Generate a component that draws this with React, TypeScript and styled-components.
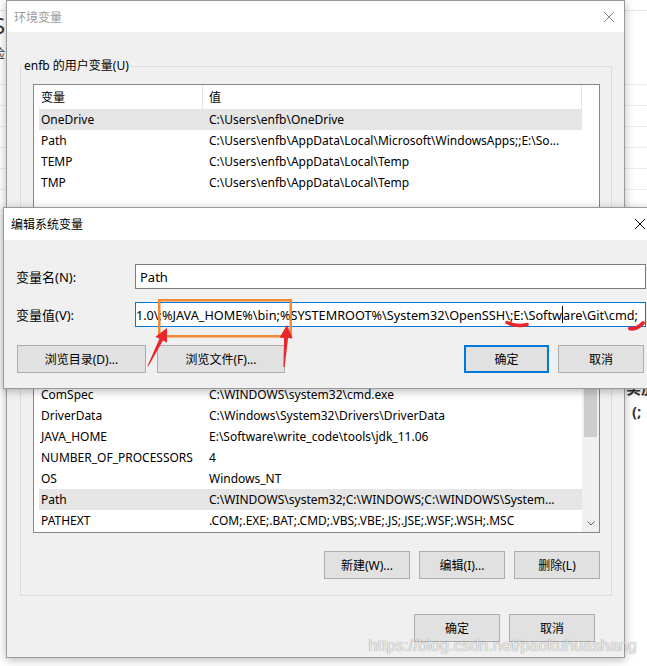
import React from "react";
import styled, { createGlobalStyle } from "styled-components";

const Global = createGlobalStyle`
  html, body { margin: 0; padding: 0; }
  body {
    width: 647px; height: 666px; overflow: hidden; background: #fff;
    font-family: "Noto Sans", "Noto Sans CJK SC", sans-serif;
    -webkit-font-smoothing: antialiased;
  }
`;

const FONT = `"Noto Sans", "Noto Sans CJK SC", sans-serif`;

const Desktop = styled.div`
  position: relative;
  width: 647px;
  height: 666px;
  overflow: hidden;
  background: #fff;
  font-family: ${FONT};
`;

/* ---------- back window (underlying settings page) ---------- */
const BackWindow = styled.div`
  position: absolute;
  inset: 0;
  background:
    repeating-linear-gradient(to bottom, transparent 0 20px, #ececec 20px 21px) 0 64px / 100% 150px no-repeat,
    #fff;
`;
const BackTopLine = styled.div`
  height: 10px;
  border-bottom: 1px solid #e6e6e6;
`;
const BackFragment = styled.div<{ $x: number; $y: number; $size: number; $bold?: boolean }>`
  position: absolute;
  left: ${(p) => p.$x}px;
  top: ${(p) => p.$y}px;
  font-size: ${(p) => p.$size}px;
  font-weight: ${(p) => (p.$bold ? 700 : 400)};
  color: #333;
  font-family: ${FONT};
  line-height: 1;
  white-space: nowrap;
`;

/* ---------- generic window pieces ---------- */
const Window = styled.div<{ $x: number; $y: number; $w: number; $h: number; $z: number }>`
  position: absolute;
  left: ${(p) => p.$x}px;
  top: ${(p) => p.$y}px;
  width: ${(p) => p.$w}px;
  height: ${(p) => p.$h}px;
  z-index: ${(p) => p.$z};
  box-sizing: border-box;
  border: 1px solid #9a9a9a;
  background: #f0f0f0;
  box-shadow: 0 2px 9px rgba(0, 0, 0, 0.28);
  display: flex;
  flex-direction: column;
`;

const TitleBar = styled.div<{ $h: number; $active?: boolean }>`
  height: ${(p) => p.$h}px;
  flex: none;
  background: #fff;
  display: flex;
  align-items: center;
  justify-content: space-between;
  padding-left: 7px;
  font-size: 12px;
  color: ${(p) => (p.$active ? "#000" : "#9a9a9a")};
`;

const CloseBox = styled.div<{ $right: number }>`
  width: 12px;
  height: 12px;
  margin-right: ${(p) => p.$right}px;
  display: flex;
`;

const CloseIcon = ({ color, right }: { color: string; right: number }) => (
  <CloseBox $right={right}>
    <svg width="12" height="12" viewBox="0 0 12 12">
      <path d="M1 1 L11 11 M11 1 L1 11" stroke={color} strokeWidth="1" />
    </svg>
  </CloseBox>
);

/* ---------- main dialog ---------- */
const MainBody = styled.div`
  flex: 1;
  padding: 26px 12px 0 13px;
  display: flex;
  flex-direction: column;
`;

const Group = styled.fieldset<{ $gap?: number; $bottom?: number }>`
  margin: ${(p) => p.$gap ?? 0}px 0 0 0;
  border: 1px solid #dcdcdc;
  padding: 10px 11px ${(p) => p.$bottom ?? 0}px 12px;
  min-width: 0;
  display: flex;
  flex-direction: column;
`;

const Legend = styled.legend`
  font-size: 12px;
  line-height: 16px;
  padding: 0 2px;
  margin-left: -11px;
  color: #000;
`;

const ListBox = styled.div<{ $h: number }>`
  height: ${(p) => p.$h}px;
  box-sizing: border-box;
  border: 1px solid #828790;
  background: #fff;
  display: flex;
  overflow: hidden;
`;

const ListContent = styled.div`
  width: 548px;
  flex: none;
  display: flex;
  flex-direction: column;
`;

const HeaderRow = styled.div`
  height: 24px;
  flex: none;
  display: grid;
  grid-template-columns: 169px 379px;
  font-size: 12px;
`;

const HeaderCell = styled.div<{ $pad: number }>`
  display: flex;
  align-items: center;
  padding-left: ${(p) => p.$pad}px;
  border-right: 1px solid #e5e5e5;
`;

const Row = styled.div<{ $selected?: boolean }>`
  height: 21px;
  flex: none;
  margin-left: 5px;
  display: grid;
  grid-template-columns: 164px 379px;
  align-items: center;
  font-size: 12px;
  color: #000;
  background: ${(p) => (p.$selected ? "#e5e5e5" : "transparent")};
`;

const Cell = styled.div<{ $pad: number }>`
  padding-left: ${(p) => p.$pad}px;
  white-space: nowrap;
  overflow: hidden;
`;

const ScrollBar = styled.div`
  flex: 1;
  background: #f0f0f0;
  display: flex;
  flex-direction: column;
`;
const ScrollArrow = styled.div`
  height: 17px;
  flex: none;
  display: flex;
  align-items: center;
  justify-content: center;
`;
const ScrollThumb = styled.div`
  height: 60px;
  margin: 0 2px;
  background: #cdcdcd;
  flex: none;
`;
const ScrollTrack = styled.div`
  flex: 1;
`;

const ButtonRow = styled.div<{ $top: number; $bottom?: number; $right?: number; $gap: number }>`
  display: flex;
  justify-content: flex-end;
  gap: ${(p) => p.$gap}px;
  margin-top: ${(p) => p.$top}px;
  margin-bottom: ${(p) => p.$bottom ?? 0}px;
  padding-right: ${(p) => p.$right ?? 0}px;
`;

const Button = styled.div<{ $w: number; $h: number; $default?: boolean }>`
  width: ${(p) => p.$w}px;
  height: ${(p) => p.$h}px;
  box-sizing: border-box;
  flex: none;
  background: #e1e1e1;
  border: ${(p) => (p.$default ? "2px solid #0078d7" : "1px solid #adadad")};
  display: flex;
  align-items: center;
  justify-content: center;
  font-size: 12px;
  color: #000;
`;

/* ---------- edit dialog ---------- */
const EditBody = styled.div`
  flex: 1;
  padding: 24px 18px 0 12px;
  display: flex;
  flex-direction: column;
  font-size: 13px;
`;

const FieldRow = styled.div<{ $top?: number }>`
  display: flex;
  align-items: center;
  margin-top: ${(p) => p.$top ?? 0}px;
`;

const FieldLabel = styled.div`
  width: 119px;
  flex: none;
  font-size: 13px;
  color: #000;
`;

const TextBox = styled.div<{ $focused?: boolean }>`
  flex: 1;
  min-width: 0;
  height: 25px;
  box-sizing: border-box;
  background: #fff;
  border: 1px solid ${(p) => (p.$focused ? "#0078d7" : "#7a7a7a")};
  display: flex;
  align-items: center;
  justify-content: ${(p) => (p.$focused ? "flex-end" : "flex-start")};
  padding: ${(p) => (p.$focused ? "0 7px 0 0" : "0 4px")};
  overflow: hidden;
  white-space: nowrap;
  font-size: ${(p) => (p.$focused ? 12.7 : 13)}px;
  color: #000;
`;

const Caret = styled.span`
  display: inline-block;
  flex: none;
  width: 1px;
  height: 17px;
  background: #000;
`;

const EditButtons = styled.div`
  display: flex;
  align-items: center;
  margin-top: 18px;
  padding-left: 1px;
  padding-right: 2px;
`;
const Spacer = styled.div`
  flex: 1;
`;
const Gap = styled.div<{ $w: number }>`
  width: ${(p) => p.$w}px;
  flex: none;
`;

/* ---------- annotations / watermark ---------- */
const Annotations = styled.svg`
  position: absolute;
  left: 0;
  top: 0;
  z-index: 10;
  pointer-events: none;
`;

const Watermark = styled.div`
  position: absolute;
  right: 10px;
  top: 637px;
  z-index: 11;
  font-size: 16px;
  font-family: "Liberation Sans", sans-serif;
  color: rgba(255, 255, 255, 0.85);
  text-shadow: 0 0 1px rgba(0, 0, 0, 0.35), 0 0 1px rgba(0, 0, 0, 0.25);
  letter-spacing: 0.2px;
`;

const userVars: [string, string][] = [
  ["OneDrive", "C:\\Users\\enfb\\OneDrive"],
  ["Path", "C:\\Users\\enfb\\AppData\\Local\\Microsoft\\WindowsApps;;E:\\So..."],
  ["TEMP", "C:\\Users\\enfb\\AppData\\Local\\Temp"],
  ["TMP", "C:\\Users\\enfb\\AppData\\Local\\Temp"],
];

const sysVars: [string, string][] = [
  ["ComSpec", "C:\\WINDOWS\\system32\\cmd.exe"],
  ["DriverData", "C:\\Windows\\System32\\Drivers\\DriverData"],
  ["JAVA_HOME", "E:\\Software\\write_code\\tools\\jdk_11.06"],
  ["NUMBER_OF_PROCESSORS", "4"],
  ["OS", "Windows_NT"],
  ["Path", "C:\\WINDOWS\\system32;C:\\WINDOWS;C:\\WINDOWS\\System..."],
  ["PATHEXT", ".COM;.EXE;.BAT;.CMD;.VBS;.VBE;.JS;.JSE;.WSF;.WSH;.MSC"],
];

const VarList = ({
  rows,
  selected,
  height,
  scroll,
}: {
  rows: [string, string][];
  selected: number;
  height: number;
  scroll?: boolean;
}) => (
  <ListBox $h={height}>
    <ListContent>
      <HeaderRow>
        <HeaderCell $pad={7}>变量</HeaderCell>
        <HeaderCell $pad={6}>值</HeaderCell>
      </HeaderRow>
      {rows.map(([k, v], i) => (
        <Row key={k + i} $selected={i === selected}>
          <Cell $pad={2}>{k}</Cell>
          <Cell $pad={6}>{v}</Cell>
        </Row>
      ))}
    </ListContent>
    {scroll ? (
      <ScrollBar>
        <ScrollArrow />
        <ScrollThumb />
        <ScrollTrack />
        <ScrollArrow>
          <svg width="8" height="5" viewBox="0 0 8 5">
            <path d="M0.5 0.5 L4 4 L7.5 0.5" stroke="#606060" strokeWidth="1" fill="none" />
          </svg>
        </ScrollArrow>
      </ScrollBar>
    ) : null}
  </ListBox>
);

export default function App() {
  return (
    <Desktop>
      <Global />
      <BackWindow>
        <BackTopLine />
        <BackFragment $x={-7} $y={14} $size={22}>S</BackFragment>
        <BackFragment $x={-8} $y={47} $size={13}>险</BackFragment>
        <BackFragment $x={626} $y={381} $size={15} $bold>实加</BackFragment>
        <BackFragment $x={632} $y={404} $size={15} $bold>(;</BackFragment>
      </BackWindow>

      <Window $x={6} $y={0} $w={619} $h={658} $z={1}>
        <TitleBar $h={31}>
          环境变量
          <CloseIcon color="#8a8a8a" right={9} />
        </TitleBar>
        <MainBody>
          <Group $bottom={12}>
            <Legend>enfb 的用户变量(U)</Legend>
            <VarList rows={userVars} selected={0} height={225} />
          </Group>
          <Group $gap={11}>
            <Legend>系统变量(S)</Legend>
            <VarList rows={sysVars} selected={5} height={174} scroll />
            <ButtonRow $top={18} $bottom={16} $gap={9}>
              <Button $w={86} $h={28}>新建(W)...</Button>
              <Button $w={86} $h={28}>编辑(I)...</Button>
              <Button $w={86} $h={28}>删除(L)</Button>
            </ButtonRow>
          </Group>
          <ButtonRow $top={18} $right={17} $gap={9}>
            <Button $w={86} $h={28}>确定</Button>
            <Button $w={86} $h={28}>取消</Button>
          </ButtonRow>
        </MainBody>
      </Window>

      <Window $x={3} $y={207} $w={662} $h={182} $z={2}>
        <TitleBar $h={32} $active>
          编辑系统变量
          <CloseIcon color="#000" right={18} />
        </TitleBar>
        <EditBody>
          <FieldRow>
            <FieldLabel>变量名(N):</FieldLabel>
            <TextBox>Path</TextBox>
          </FieldRow>
          <FieldRow $top={13}>
            <FieldLabel>变量值(V):</FieldLabel>
            <TextBox $focused>
              <span>v1.0\;%JAVA_HOME%\bin;%SYSTEMROOT%\System32\OpenSSH\;E:\Softw</span>
              <Caret />
              <span>are\Git\cmd;</span>
            </TextBox>
          </FieldRow>
          <EditButtons>
            <Button $w={129} $h={28}>浏览目录(D)...</Button>
            <Gap $w={11} />
            <Button $w={128} $h={28}>浏览文件(F)...</Button>
            <Spacer />
            <Button $w={85} $h={28} $default>确定</Button>
            <Gap $w={9} />
            <Button $w={86} $h={28}>取消</Button>
          </EditButtons>
        </EditBody>
      </Window>

      <Annotations width="647" height="666" viewBox="0 0 647 666">
        <rect x="159.25" y="300.25" width="131.5" height="36" fill="none" stroke="#f08a34" strokeWidth="2.5" />
        <polygon
          points="147.6,365.8 159.4,338.7 155.4,336.7 167,328 167,342.5 163,340.5 148.4,366.2"
          fill="#e8262b"
        />
        <polygon
          points="283.4,367 284.1,337.9 279.6,337.5 287,325 292.6,338.5 288.1,338.1 284.6,367"
          fill="#e8262b"
        />
        <path d="M507 322.5 Q516 327 527 324.5" stroke="#e8262b" strokeWidth="3.5" strokeLinecap="round" fill="none" />
        <path d="M630 328.5 Q637 329.5 643 323" stroke="#e8262b" strokeWidth="4" strokeLinecap="round" fill="none" />
      </Annotations>

      <Watermark>https://blog.csdn.net/paokuhuashang</Watermark>
    </Desktop>
  );
}
